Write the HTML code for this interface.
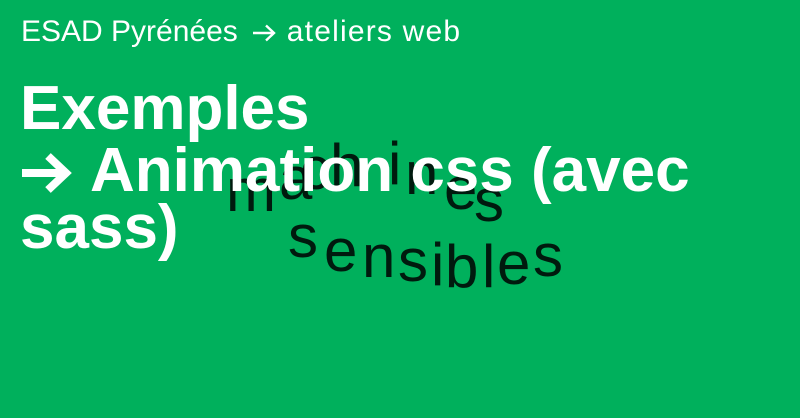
<!DOCTYPE html>
<html><head><meta charset="utf-8"><style>
html,body{margin:0;padding:0}
body{width:800px;height:418px;background:#00b05c;position:relative;overflow:hidden;font-family:"Liberation Sans",sans-serif}
.hd{position:absolute;left:21px;top:12px;font-size:30px;line-height:40px;color:#fff;white-space:nowrap}
.t{position:absolute;left:20px;font-size:62px;font-weight:bold;color:#fff;line-height:62px;white-space:nowrap;z-index:2}
.l{position:absolute;font-size:60px;line-height:60px;color:rgba(0,0,0,0.85);z-index:1}
svg{display:inline-block}
</style></head><body>
<div class="hd">ESAD Pyrénées<svg width="24" height="18" viewBox="0 0 24 18" style="vertical-align:-1px;margin:0 11px 0 14px"><path d="M1 9H22M14 1.5L22 9L14 16.5" fill="none" stroke="#fff" stroke-width="2.4"/></svg><span style="letter-spacing:1.2px">ateliers web</span></div>
<div class="t" style="top:78px">Exemples</div>
<div class="t" style="top:140px"><svg width="52" height="40" viewBox="0 0 52 40" style="vertical-align:-2px;margin-right:18px"><path d="M2 20H46M28 3L46 20L28 37" fill="none" stroke="#fff" stroke-width="8"/></svg>Animation css (avec</div>
<div class="t" style="top:197px">sass)</div>

<span class="l" style="left:226px;top:161px">m</span>
<span class="l" style="left:279px;top:149px">a</span>
<span class="l" style="left:300px;top:139px">c</span>
<span class="l" style="left:330px;top:136px">h</span>
<span class="l" style="left:388px;top:134px">i</span>
<span class="l" style="left:405px;top:144px">n</span>
<span class="l" style="left:444px;top:159px">e</span>
<span class="l" style="left:474px;top:171px">s</span>

<span class="l" style="left:288px;top:207px">s</span>
<span class="l" style="left:324px;top:221px">e</span>
<span class="l" style="left:362px;top:227px">n</span>
<span class="l" style="left:398px;top:231px">s</span>
<span class="l" style="left:431px;top:235px">i</span>
<span class="l" style="left:445px;top:237px">b</span>
<span class="l" style="left:482px;top:237px">l</span>
<span class="l" style="left:497px;top:234px">e</span>
<span class="l" style="left:533px;top:226px">s</span>
</body></html>
